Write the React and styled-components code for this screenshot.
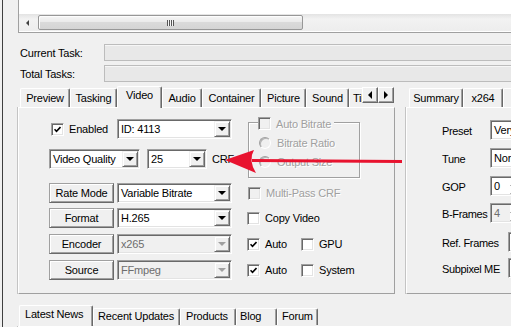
import React from "react";
import styled, { createGlobalStyle } from "styled-components";

const GlobalStyle = createGlobalStyle`
  html, body { margin: 0; padding: 0; background: #f0f0f0; }
  body {
    font-family: "Liberation Sans", Arial, sans-serif;
    font-size: 11px;
    letter-spacing: -0.2px;
    color: #000;
  }
  * { box-sizing: border-box; }
`;

const Window = styled.div`
  position: relative;
  width: 511px;
  height: 327px;
  overflow: hidden;
  background: #f0f0f0;
`;

const Frame = styled.div`
  margin-left: 2px;
  height: 100%;
  border-left: 1px solid #3f3f3f;
  padding-left: 15px;
  display: flex;
  flex-direction: column;
`;

/* ---------- top list with scrollbar ---------- */

const ListBox = styled.div`
  height: 33px;
  flex-shrink: 0;
  margin-right: -10px;
  background: #fff;
  border-left: 1px solid #a0a0a0;
  border-bottom: 1px solid #a0a0a0;
  display: flex;
  flex-direction: column;
  justify-content: flex-end;
  padding-bottom: 1px;
`;

const HScroll = styled.div`
  height: 17px;
  display: flex;
  align-items: center;
  background: linear-gradient(#e3e3e3, #f2f2f2 30%, #ededed);
`;

const ScrollArrow = styled.span`
  width: 17px;
  height: 17px;
  flex-shrink: 0;
  display: flex;
  align-items: center;
  justify-content: center;
  &::before {
    content: "";
    border-top: 3px solid transparent;
    border-bottom: 3px solid transparent;
    border-right: 3px solid #404040;
  }
`;

const Thumb = styled.span`
  margin-left: 2px;
  width: 265px;
  height: 15px;
  border: 1px solid #979797;
  border-radius: 2px;
  background: linear-gradient(#f6f6f6, #e9e9e9 50%, #dadada 50%, #d4d4d4);
  box-shadow: inset 1px 1px 0 #fdfdfd;
  display: flex;
  align-items: center;
  justify-content: center;
  &::after {
    content: "";
    width: 7px;
    height: 6px;
    background: repeating-linear-gradient(90deg, #555 0 1px, #f4f4f4 1px 2px);
  }
`;

/* ---------- task progress ---------- */

const TaskSection = styled.div`
  margin-top: 11px;
  display: flex;
  flex-direction: column;
  gap: 4px;
  margin-right: -10px;
`;

const TaskRow = styled.div`
  display: flex;
  align-items: center;
  height: 17px;
`;

const TaskLabel = styled.span`
  width: 86px;
  padding-left: 2px;
  flex-shrink: 0;
`;

const ProgressBox = styled.div`
  flex: 1;
  height: 17px;
  border: 1px solid #bcbcbc;
  background: #e8e8e8;
  box-shadow: inset 0 1px 0 #f6f6f6;
`;

/* ---------- tab controls ---------- */

const TabArea = styled.div`
  margin-top: 4px;
  display: flex;
  align-items: flex-start;
  flex-shrink: 0;
`;

const TabControl = styled.div`
  display: flex;
  flex-direction: column;
  flex-shrink: 0;
  width: ${(p) => p.$w}px;
  margin-left: ${(p) => p.$ml || 0}px;
`;

const TabStrip = styled.div`
  position: relative;
  z-index: 1;
  display: flex;
  align-items: flex-start;
  height: 22px;
  margin-bottom: -1px;
  padding-left: ${(p) => p.$pl}px;
`;

const TabsClip = styled.div`
  display: flex;
  align-items: flex-end;
  height: 22px;
  width: ${(p) => (p.$w ? `${p.$w}px` : "auto")};
  overflow: hidden;
  flex-shrink: 0;
`;

const Tab = styled.div`
  flex-shrink: 0;
  width: ${(p) => p.$w}px;
  height: ${(p) => (p.$active ? 22 : 19)}px;
  margin-bottom: ${(p) => (p.$active ? 0 : 1)}px;
  padding: ${(p) => (p.$active ? "2px" : "3px")} 0 0 ${(p) => p.$pl || 0}px;
  text-align: ${(p) => (p.$pl ? "left" : "center")};
  white-space: nowrap;
  overflow: hidden;
  background: #f0f0f0;
  border: 1px solid;
  border-color: #fff #696969 transparent #fff;
  border-bottom: none;
  border-radius: 2px 2px 0 0;
  box-shadow: inset -1px 0 0 #a0a0a0;
`;

const ArrowPair = styled.div`
  display: flex;
  margin-top: 1px;
`;

const SmallButton = styled.span`
  width: 16px;
  height: 16px;
  display: flex;
  align-items: center;
  justify-content: center;
  background: #f0f0f0;
  border: 1px solid;
  border-color: #fff #696969 #696969 #fff;
  box-shadow: inset -1px -1px 0 #a0a0a0;
  &::before {
    content: "";
    border-top: 4px solid transparent;
    border-bottom: 4px solid transparent;
    ${(p) => (p.$dir === "left" ? "border-right" : "border-left")}: 4px solid #000;
  }
`;

const TabPanel = styled.div`
  height: 187px;
  background: #f0f0f0;
  border: 1px solid;
  border-color: #fff #a0a0a0 #a0a0a0 #fff;
  box-shadow: -1px 0 0 #c4c4c4;
  padding: ${(p) => p.$pt}px 0 0 ${(p) => p.$pl}px;
  display: flex;
  flex-direction: column;
`;

/* ---------- form controls ---------- */

const TopBlock = styled.div`
  display: flex;
  height: 61px;
  flex-shrink: 0;
`;

const Column = styled.div`
  display: flex;
  flex-direction: column;
  width: ${(p) => p.$w}px;
  flex-shrink: 0;
`;

const Row = styled.div`
  display: flex;
  align-items: center;
  height: 20px;
  margin-top: ${(p) => p.$mt || 0}px;
  flex-shrink: 0;
`;

const Label = styled.span`
  white-space: nowrap;
  margin-left: ${(p) => p.$ml || 0}px;
  color: ${(p) => (p.$disabled ? "#a0a0a0" : "#000")};
  text-shadow: ${(p) => (p.$disabled ? "1px 1px 0 #fff" : "none")};
`;

const CheckItem = styled.label`
  display: flex;
  align-items: center;
  gap: 5px;
  flex-shrink: 0;
  width: ${(p) => (p.$w ? `${p.$w}px` : "auto")};
  margin-left: ${(p) => p.$ml || 0}px;
  white-space: nowrap;
`;

const Box = styled.span`
  width: 13px;
  height: 13px;
  flex-shrink: 0;
  display: flex;
  align-items: center;
  justify-content: center;
  background: ${(p) => (p.$disabled ? "#f0f0f0" : "#fff")};
  border: 1px solid;
  border-color: #a0a0a0 #fff #fff #a0a0a0;
  box-shadow: inset 1px 1px 0 #696969, inset -1px -1px 0 #e3e3e3;
`;

const RadioDot = styled.span`
  width: 12px;
  height: 12px;
  flex-shrink: 0;
  border-radius: 50%;
  background: #f0f0f0;
  border: 1px solid;
  border-color: #a0a0a0 #fff #fff #a0a0a0;
  box-shadow: inset 1px 1px 0 #b4b4b4;
`;

const ComboField = styled.div`
  display: flex;
  align-items: center;
  width: ${(p) => p.$w}px;
  height: 20px;
  flex-shrink: 0;
  margin-left: ${(p) => p.$ml || 0}px;
  padding: 1px;
  background: ${(p) => (p.$disabled ? "#f0f0f0" : "#fff")};
  border: 1px solid;
  border-color: #a0a0a0 #fff #fff #a0a0a0;
  box-shadow: inset 1px 1px 0 #696969, inset -1px -1px 0 #e3e3e3;
`;

const ComboText = styled.span`
  flex: 1;
  min-width: 0;
  padding-left: 2px;
  white-space: nowrap;
  overflow: hidden;
  color: ${(p) => (p.$disabled ? "#6d6d6d" : "#000")};
`;

const DropButton = styled.span`
  width: 16px;
  height: 16px;
  flex-shrink: 0;
  display: flex;
  align-items: center;
  justify-content: center;
  background: #f0f0f0;
  border: 1px solid;
  border-color: #f0f0f0 #696969 #696969 #f0f0f0;
  box-shadow: inset 1px 1px 0 #fff, inset -1px -1px 0 #a0a0a0;
  &::before {
    content: "";
    border-left: 4px solid transparent;
    border-right: 4px solid transparent;
    border-top: 4px solid ${(p) => (p.$disabled ? "#a0a0a0" : "#000")};
  }
`;

const SpinText = styled.span`
  width: 18px;
  flex-shrink: 0;
  padding-left: 2px;
  color: ${(p) => (p.$disabled ? "#6d6d6d" : "#000")};
`;

const SpinButtons = styled.span`
  display: flex;
  flex-direction: column;
  width: 16px;
  height: 100%;
  & > span {
    flex: 1;
    background: #f0f0f0;
    border: 1px solid;
    border-color: #fff #696969 #696969 #fff;
  }
`;

const PushButton = styled.button`
  width: 65px;
  height: 20px;
  flex-shrink: 0;
  padding: 0 0 1px;
  font: inherit;
  letter-spacing: inherit;
  color: #000;
  background: #f0f0f0;
  border: 1px solid;
  border-color: #a0a0a0 #696969 #696969 #a0a0a0;
  box-shadow: inset 1px 1px 0 #fff, inset -1px -1px 0 #a0a0a0;
`;

const GroupBox = styled.div`
  position: relative;
  width: 112px;
  height: 56px;
  margin: 5px 0 0 13px;
  border: 1px solid #a0a0a0;
  box-shadow: inset 1px 1px 0 #fff, 1px 1px 0 #fff;
  padding: 10px 0 0 10px;
  display: flex;
  flex-direction: column;
`;

const Legend = styled.div`
  position: absolute;
  top: -6px;
  left: 9px;
  padding-right: 3px;
  background: #f0f0f0;
`;

const RadioRow = styled.div`
  display: flex;
  align-items: center;
  gap: 6px;
  height: 19px;
`;

const RightRow = styled.div`
  display: flex;
  align-items: center;
  height: ${(p) => p.$h || 20}px;
  margin-top: ${(p) => p.$mt || 0}px;
  flex-shrink: 0;
`;

const FieldLabel = styled.span`
  width: ${(p) => p.$w}px;
  flex-shrink: 0;
  white-space: nowrap;
  padding-top: 2px;
  letter-spacing: -0.35px;
`;

const BottomStrip = styled.div`
  margin-top: 11px;
  margin-left: 1px;
  display: flex;
  align-items: flex-end;
  height: 21px;
  flex-shrink: 0;
`;

const BottomTab = styled.div`
  flex-shrink: 0;
  width: ${(p) => p.$w}px;
  height: ${(p) => (p.$active ? 21 : 17)}px;
  margin-bottom: ${(p) => (p.$active ? 0 : 1)}px;
  padding: ${(p) => (p.$active ? 2 : 1)}px 0 0 ${(p) => p.$pl}px;
  white-space: nowrap;
  background: #f0f0f0;
  border: 1px solid;
  border-color: #fff #696969 transparent #fff;
  border-bottom: none;
  border-radius: 2px 2px 0 0;
  box-shadow: inset -1px 0 0 #a0a0a0;
`;

const BottomPanel = styled.div`
  height: 10px;
  margin-right: -10px;
  border-top: 1px solid #fff;
  border-left: 1px solid #fff;
  box-shadow: -1px 0 0 #c4c4c4;
`;

const ArrowLayer = styled.svg`
  position: absolute;
  left: 0;
  top: 0;
  pointer-events: none;
`;

/* ---------- small pieces ---------- */

function Check({ checked, disabled }) {
  return (
    <Box $disabled={disabled}>
      {checked && (
        <svg width="7" height="7" viewBox="0 0 7 7">
          <path d="M0.5 3.2 L2.5 5.3 L6.5 1" fill="none" stroke="#000" strokeWidth="1.6" />
        </svg>
      )}
    </Box>
  );
}

function Combo({ value, width, disabled, ml }) {
  return (
    <ComboField $w={width} $disabled={disabled} $ml={ml}>
      <ComboText $disabled={disabled}>{value}</ComboText>
      <DropButton $disabled={disabled} />
    </ComboField>
  );
}

function Spin({ value, disabled }) {
  return (
    <ComboField $w={44} $disabled={disabled}>
      <SpinText $disabled={disabled}>{value}</SpinText>
      <SpinButtons>
        <span />
        <span />
      </SpinButtons>
    </ComboField>
  );
}

const videoTabs = [
  ["Preview", 50],
  ["Tasking", 47],
  ["Video", 45, true],
  ["Audio", 40],
  ["Container", 59],
  ["Picture", 45],
  ["Sound", 43],
  ["Tiles", 40, false, 3],
];

const encoderRows = [
  ["Rate Mode", "Variable Bitrate", false, 5],
  ["Format", "H.265", false, 5],
  ["Encoder", "x265", true, 6],
  ["Source", "FFmpeg", true, 6],
];

const newsTabs = [
  ["Latest News", 74, 5, true],
  ["Recent Updates", 87, 4],
  ["Products", 56, 5],
  ["Blog", 41, 3],
  ["Forum", 41, 4],
];

export default function App() {
  return (
    <Window>
      <GlobalStyle />
      <Frame>
        <ListBox>
          <HScroll>
            <ScrollArrow />
            <Thumb />
          </HScroll>
        </ListBox>

        <TaskSection>
          <TaskRow>
            <TaskLabel>Current Task:</TaskLabel>
            <ProgressBox />
          </TaskRow>
          <TaskRow>
            <TaskLabel>Total Tasks:</TaskLabel>
            <ProgressBox />
          </TaskRow>
        </TaskSection>

        <TabArea>
          <TabControl $w={377}>
            <TabStrip $pl={2}>
              <TabsClip $w={342}>
                {videoTabs.map(([name, w, active, pl]) => (
                  <Tab key={name} $w={w} $active={active} $pl={pl}>
                    {name}
                  </Tab>
                ))}
              </TabsClip>
              <ArrowPair>
                <SmallButton $dir="left" />
                <SmallButton $dir="right" />
              </ArrowPair>
            </TabStrip>
            <TabPanel $pt={9} $pl={30}>
              <TopBlock>
                <Column $w={186}>
                  <Row $mt={2}>
                    <CheckItem $w={66} $ml={2}>
                      <Check checked />
                      Enabled
                    </CheckItem>
                    <Combo value="ID: 4113" width={115} />
                  </Row>
                  <Row $mt={10}>
                    <Combo value="Video Quality" width={91} />
                    <Combo value="25" width={60} ml={7} />
                    <Label $ml={5}>CRF</Label>
                  </Row>
                </Column>
                <GroupBox>
                  <Legend>
                    <CheckItem>
                      <Check disabled />
                      <Label $disabled>Auto Bitrate</Label>
                    </CheckItem>
                  </Legend>
                  <RadioRow>
                    <RadioDot />
                    <Label $disabled>Bitrate Ratio</Label>
                  </RadioRow>
                  <RadioRow>
                    <RadioDot />
                    <Label $disabled>Output Size</Label>
                  </RadioRow>
                </GroupBox>
              </TopBlock>

              {encoderRows.map(([btn, value, disabled, mt], i) => (
                <Row key={btn} $mt={mt}>
                  <PushButton>{btn}</PushButton>
                  <Combo value={value} width={115} disabled={disabled} ml={3} />
                  {i === 0 && (
                    <CheckItem $ml={16}>
                      <Check disabled />
                      <Label $disabled>Multi-Pass CRF</Label>
                    </CheckItem>
                  )}
                  {i === 1 && (
                    <CheckItem $ml={15}>
                      <Check />
                      Copy Video
                    </CheckItem>
                  )}
                  {i >= 2 && (
                    <>
                      <CheckItem $ml={15} $w={54}>
                        <Check checked />
                        Auto
                      </CheckItem>
                      <CheckItem>
                        <Check />
                        {i === 2 ? "GPU" : "System"}
                      </CheckItem>
                    </>
                  )}
                </Row>
              ))}
            </TabPanel>
          </TabControl>

          <TabControl $w={150} $ml={11}>
            <TabStrip $pl={3}>
              <TabsClip>
                <Tab $w={54}>Summary</Tab>
                <Tab $w={40}>x264</Tab>
                <Tab $w={50} />
              </TabsClip>
            </TabStrip>
            <TabPanel $pt={12} $pl={35}>
              <RightRow>
                <FieldLabel $w={48}>Preset</FieldLabel>
                <Combo value="Very Fast" width={60} />
              </RightRow>
              <RightRow $mt={8}>
                <FieldLabel $w={48}>Tune</FieldLabel>
                <Combo value="Normal" width={60} />
              </RightRow>
              <RightRow $mt={8}>
                <FieldLabel $w={48}>GOP</FieldLabel>
                <Spin value="0" />
              </RightRow>
              <RightRow $mt={8} $h={18}>
                <FieldLabel $w={48}>B-Frames</FieldLabel>
                <Spin value="4" disabled />
              </RightRow>
              <RightRow $mt={10} $h={19}>
                <FieldLabel $w={66}>Ref. Frames</FieldLabel>
                <Combo value="3" width={60} />
              </RightRow>
              <RightRow $mt={7}>
                <FieldLabel $w={66}>Subpixel ME</FieldLabel>
                <Combo value="7" width={60} />
              </RightRow>
            </TabPanel>
          </TabControl>
        </TabArea>

        <BottomStrip>
          {newsTabs.map(([name, w, pl, active]) => (
            <BottomTab key={name} $w={w} $pl={pl} $active={active}>
              {name}
            </BottomTab>
          ))}
        </BottomStrip>
        <BottomPanel />
      </Frame>

      <ArrowLayer width="511" height="327" viewBox="0 0 511 327">
        <line x1="252" y1="160.5" x2="402" y2="161.5" stroke="#e8132f" strokeWidth="3" />
        <path d="M225 160 L254 150 Q248 160 256 173 Z" fill="#e8132f" />
      </ArrowLayer>
    </Window>
  );
}
